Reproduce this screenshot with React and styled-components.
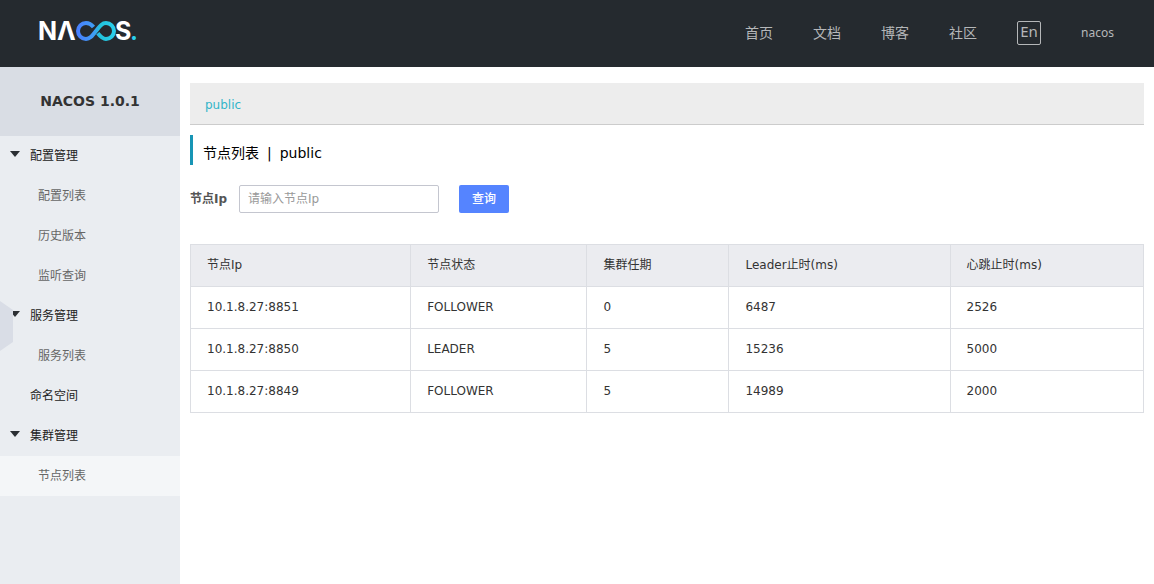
import React, { useState } from "react";
import styled, { createGlobalStyle } from "styled-components";

const GlobalStyle = createGlobalStyle`
  * {
    box-sizing: border-box;
  }
  body {
    margin: 0;
    background: #fff;
    color: #333;
    font-family: "DejaVu Sans", "Noto Sans CJK SC", sans-serif;
    font-size: 12px;
    line-height: 20px;
  }
  a {
    color: inherit;
    text-decoration: none;
  }
`;

const Page = styled.div`
  display: flex;
  flex-direction: column;
  min-height: 100vh;
`;

const Header = styled.header`
  display: flex;
  align-items: center;
  justify-content: space-between;
  height: 67px;
  padding: 0 40px 2px 36px;
  background: #252a2f;
  color: #b5b7b9;
  font-family: "Noto Sans", "Noto Sans CJK SC", sans-serif;
`;

const LogoLink = styled.a`
  display: block;
  height: 36px;
  margin-bottom: 4px;
`;

const TopNav = styled.nav`
  display: flex;
  align-items: center;
  gap: 40px;
  font-size: 14px;
`;

const LangButton = styled.button`
  width: 24px;
  height: 24px;
  padding: 0 0 4px;
  border: 1px solid #b5b7b9;
  border-radius: 2px;
  background: transparent;
  color: inherit;
  font-family: inherit;
  font-size: 15px;
  line-height: 18px;
  cursor: pointer;
`;

const UserLink = styled.a`
  font-size: 12px;
`;

const Body = styled.div`
  display: flex;
  flex: 1;
`;

const Sidebar = styled.aside`
  position: relative;
  flex: 0 0 180px;
  background: #eaedf1;
`;

const Version = styled.h1`
  margin: 0;
  padding: 24px 0 25px;
  background: #d9dde4;
  font-size: 14px;
  line-height: 20px;
  text-align: center;
`;

const Menu = styled.ul`
  margin: 0;
  padding: 0;
  list-style: none;
`;

const MenuGroup = styled.button`
  display: flex;
  align-items: center;
  gap: 10px;
  width: 100%;
  height: 40px;
  padding: 0 10px;
  border: 0;
  background: transparent;
  color: #222;
  font: inherit;
  cursor: pointer;
`;

const Arrow = styled.span`
  width: 10px;
  height: 6px;
  margin-bottom: 4px;
  background: ${props => (props.$visible ? "#2b2f33" : "transparent")};
  clip-path: polygon(0 0, 100% 0, 50% 100%);
`;

const MenuItem = styled.a`
  display: block;
  height: 40px;
  padding-left: 38px;
  background: ${props => (props.$active ? "#f4f6f8" : "transparent")};
  color: #666;
  line-height: 40px;
`;

const CollapseHandle = styled.button`
  position: absolute;
  top: 234px;
  left: 0;
  width: 13px;
  height: 50px;
  padding: 0;
  border: 0;
  background: #d9dde6;
  clip-path: polygon(0 0, 100% 18%, 100% 82%, 0 100%);
  cursor: pointer;
`;

const Main = styled.main`
  flex: 1;
  min-width: 0;
  padding: 16px 10px;
`;

const NamespaceBar = styled.div`
  padding: 12px 15px 9px;
  border-bottom: 1px solid #ccc;
  background: #ededed;
  color: #33b5c9;
`;

const Title = styled.h2`
  display: flex;
  gap: 8px;
  margin: 10px 0 20px;
  padding-left: 10px;
  border-left: 3px solid #1795b5;
  color: #000;
  font-size: 14px;
  font-weight: 400;
  line-height: 36px;
  height: 30px;
`;

const SearchForm = styled.form`
  display: flex;
  align-items: center;
  margin-bottom: 31px;
`;

const Label = styled.label`
  margin-right: 12px;
  color: #555;
  font-weight: 700;
`;

const Input = styled.input`
  width: 200px;
  height: 28px;
  padding: 0 8px;
  border: 1px solid #c4c6cf;
  border-radius: 2px;
  color: #333;
  font: inherit;
  &::placeholder {
    color: #999;
  }
`;

const SearchButton = styled.button`
  height: 28px;
  margin-left: 20px;
  padding: 0 13px;
  border: 0;
  border-radius: 2px;
  background: #5584ff;
  color: #fff;
  font: inherit;
  font-weight: 500;
  cursor: pointer;
`;

const Table = styled.table`
  width: 100%;
  border-collapse: collapse;
  table-layout: fixed;
`;

const Col = styled.col`
  width: ${props => props.$width};
`;

const Th = styled.th`
  height: 42px;
  padding: 0 16px 2px;
  border: 1px solid #dcdee3;
  background: #ebecf0;
  font-weight: 400;
  text-align: left;
`;

const Td = styled.td`
  height: 42px;
  padding: 0 16px 2px;
  border: 1px solid #dcdee3;
`;

const links = ["首页", "文档", "博客", "社区"];

const menu = [
  { name: "配置管理", children: ["配置列表", "历史版本", "监听查询"] },
  { name: "服务管理", children: ["服务列表"] },
  { name: "命名空间", children: [] },
  { name: "集群管理", children: ["节点列表"] }
];

const columns = [
  { title: "节点Ip", key: "ip", width: "23.1%" },
  { title: "节点状态", key: "state", width: "18.5%" },
  { title: "集群任期", key: "term", width: "14.9%" },
  { title: "Leader止时(ms)", key: "leaderDue", width: "23.2%" },
  { title: "心跳止时(ms)", key: "heartbeatDue", width: "20.3%" }
];

const nodes = [
  { ip: "10.1.8.27:8851", state: "FOLLOWER", term: 0, leaderDue: 6487, heartbeatDue: 2526 },
  { ip: "10.1.8.27:8850", state: "LEADER", term: 5, leaderDue: 15236, heartbeatDue: 5000 },
  { ip: "10.1.8.27:8849", state: "FOLLOWER", term: 5, leaderDue: 14989, heartbeatDue: 2000 }
];

const Logo = () => (
  <svg width="108" height="36" viewBox="-4 0 108 36">
    <defs>
      <linearGradient id="loop" gradientUnits="userSpaceOnUse" x1="36" y1="0" x2="76" y2="0">
        <stop offset="0" stopColor="#4a7dff" />
        <stop offset="0.45" stopColor="#3f9df5" />
        <stop offset="0.6" stopColor="#22c3dc" />
        <stop offset="1" stopColor="#2bd0ee" />
      </linearGradient>
    </defs>
    <g fill="#fff" fontFamily="Inter, sans-serif" fontSize="25" fontWeight="700">
      <text x="-2" y="27">N</text>
      <text x="17" y="27">Λ</text>
      <text x="75" y="27">S</text>
      <text x="90" y="27" fill="#2bd0ee" fontWeight="600">.</text>
    </g>
    <path
      fill="none"
      stroke="url(#loop)"
      strokeWidth="4"
      d="M53.500 14C51.500 11.500 49.300 10 46 10C41.500 10 38 13.500 38 18C38 22.500 41.500 26 46 26C49.700 26 51.700 23.500 56 18C60.300 12.500 62.300 10 66 10C70.500 10 74 13.500 74 18C74 22.500 70.500 26 66 26C62.700 26 60.700 24 57.800 20.300"
    />
  </svg>
);

const App = () => {
  const [ip, setIp] = useState("");
  const [keyword, setKeyword] = useState("");
  const [closed, setClosed] = useState({});

  const search = e => {
    e.preventDefault();
    setKeyword(ip);
  };

  return (
    <Page>
      <GlobalStyle />
      <Header>
        <LogoLink href="#" aria-label="NACOS">
          <Logo />
        </LogoLink>
        <TopNav>
          {links.map(link => (
            <a href="#" key={link}>
              {link}
            </a>
          ))}
          <LangButton type="button">En</LangButton>
          <UserLink href="#">nacos</UserLink>
        </TopNav>
      </Header>
      <Body>
        <Sidebar>
          <Version>NACOS 1.0.1</Version>
          <Menu>
            {menu.map(group => (
              <li key={group.name}>
                <MenuGroup
                  type="button"
                  onClick={() =>
                    setClosed({ ...closed, [group.name]: !closed[group.name] })
                  }
                >
                  <Arrow $visible={group.children.length > 0} />
                  {group.name}
                </MenuGroup>
                {!closed[group.name] &&
                  group.children.map(name => (
                    <MenuItem href="#" key={name} $active={name === "节点列表"}>
                      {name}
                    </MenuItem>
                  ))}
              </li>
            ))}
          </Menu>
          <CollapseHandle type="button" aria-label="menu" />
        </Sidebar>
        <Main>
          <NamespaceBar>
            <a href="#">public</a>
          </NamespaceBar>
          <Title>
            <span>节点列表</span>
            <span>|</span>
            <span>public</span>
          </Title>
          <SearchForm onSubmit={search}>
            <Label htmlFor="ip">节点Ip</Label>
            <Input
              id="ip"
              placeholder="请输入节点Ip"
              value={ip}
              onChange={e => setIp(e.target.value)}
            />
            <SearchButton type="submit">查询</SearchButton>
          </SearchForm>
          <Table>
            <colgroup>
              {columns.map(col => (
                <Col key={col.key} $width={col.width} />
              ))}
            </colgroup>
            <thead>
              <tr>
                {columns.map(col => (
                  <Th key={col.key}>{col.title}</Th>
                ))}
              </tr>
            </thead>
            <tbody>
              {nodes
                .filter(node => node.ip.includes(keyword))
                .map(node => (
                  <tr key={node.ip}>
                    {columns.map(col => (
                      <Td key={col.key}>{node[col.key]}</Td>
                    ))}
                  </tr>
                ))}
            </tbody>
          </Table>
        </Main>
      </Body>
    </Page>
  );
};

export default App;
